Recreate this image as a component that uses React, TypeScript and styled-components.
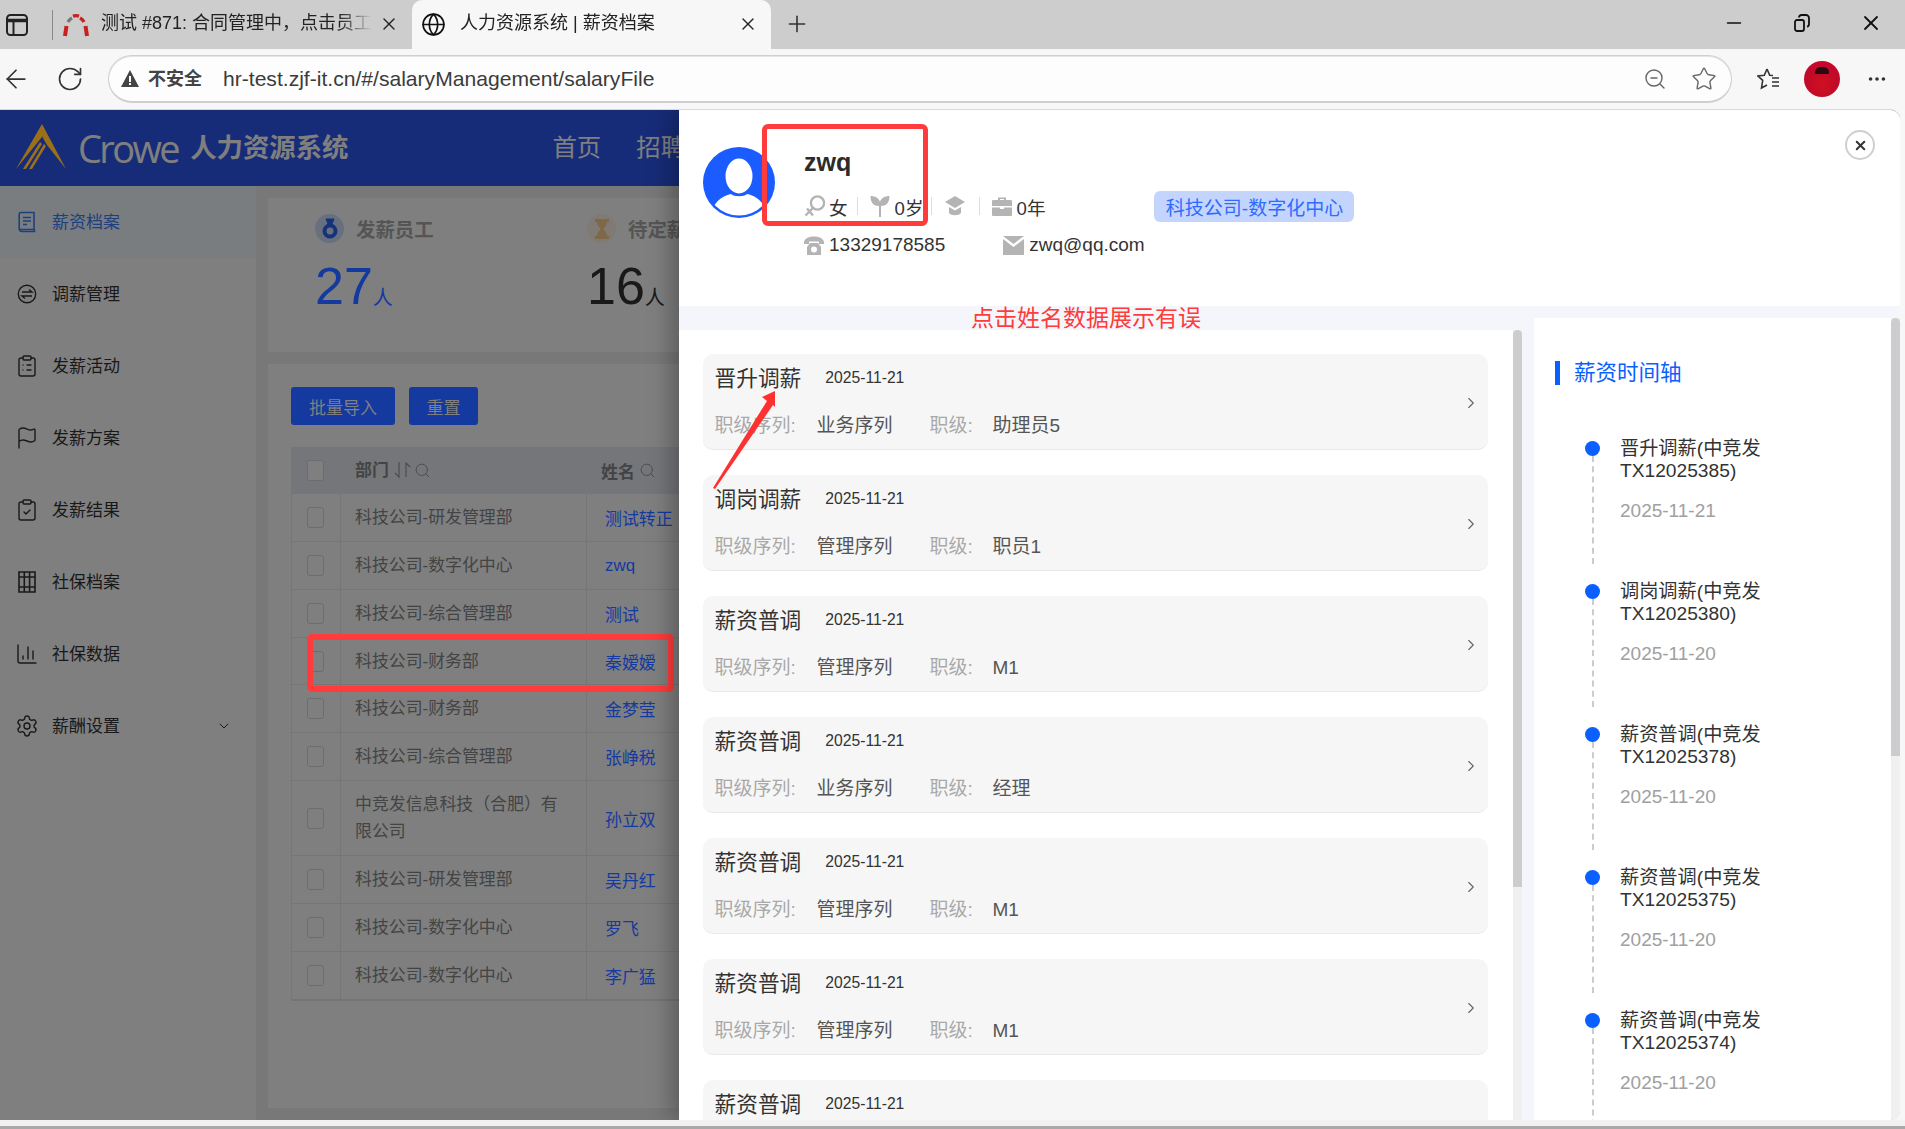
import React from "react";
import styled, { createGlobalStyle } from "styled-components";
import { ChevronRight, ChevronDown, Plus, Minus, X, ArrowLeft, RotateCw, ZoomOut, Star, MoreHorizontal, Globe, Search, Settings, BarChart3, ClipboardCheck, ClipboardList, Flag } from "lucide-react";

const FONT = `"Liberation Sans","Noto Sans CJK SC",sans-serif`;
const DIM_BLUE = "#14399f";

const Global = createGlobalStyle`
  html, body { margin: 0; padding: 0; background: #f7f7f7; }
  body { width: 1905px; height: 1129px; overflow: hidden; font-family: ${FONT}; color: #333; }
  * { box-sizing: border-box; }
  svg { flex-shrink: 0; }
`;

const Shell = styled.div`
  width: 1905px; height: 1129px; display: flex; flex-direction: column; background: #f7f7f7; position: relative; overflow: hidden;
`;
const TabBar = styled.div`
  height: 49px; background: #cdcdcd; display: flex; align-items: center; flex: none;
`;
const TabToggle = styled.div`
  width: 52px; height: 49px; display: flex; align-items: center; padding-left: 6px;
`;
const TabSep = styled.div`width: 1px; height: 30px; background: #8a8a8a;`;
const InactiveTab = styled.div`
  width: 359px; height: 49px; display: flex; align-items: center; padding-left: 10px; flex: none;
`;
const ActiveTab = styled.div`
  width: 359px; height: 49px; background: #f7f7f7; border-radius: 10px 10px 0 0; display: flex; align-items: center; padding-left: 9px; flex: none;
`;
const TabTitle = styled.div<{ $w: number; $ml: number }>`
  width: ${(p) => p.$w}px; margin-left: ${(p) => p.$ml}px; margin-bottom: 4px; font-size: 18px; line-height: 24px; color: #222; white-space: nowrap; overflow: hidden;
  -webkit-mask-image: linear-gradient(to right, #000 88%, transparent 100%);
`;
const TabClose = styled.div<{ $ml: number }>`margin-left: ${(p) => p.$ml}px; display: flex; color: #222; margin-bottom: 2px;`;
const NewTab = styled.div`margin-left: 13px; display: flex; color: #333; margin-bottom: 2px;`;
const WindowControls = styled.div`
  margin-left: auto; display: flex; align-items: center; gap: 49px; padding-right: 22px; color: #111; margin-bottom: 3px;
`;
const ToolBar = styled.div`
  height: 60px; flex: none; display: flex; align-items: center; padding: 0 0 0 1px; position: relative;
`;
const NavBtn = styled.div<{ $w: number }>`width: ${(p) => p.$w}px; display: flex; color: #333; flex: none;`;
const Address = styled.div`
  width: 1624px; height: 48px; border: 1px solid #cfcfcf; border-bottom-width: 2px; border-radius: 24px; background: #fdfdfd;
  display: flex; align-items: center; padding: 0 14px 0 12px; flex: none; box-shadow: inset 0 1px 0 #e4e4e4;
`;
const Insecure = styled.div`
  margin-left: 9px; font-size: 18px; font-weight: 700; color: #444; line-height: 24px; width: 75px;
`;
const Url = styled.div`font-size: 21.1px; color: #3b3b3b; line-height: 26px; white-space: nowrap;`;
const AddressIcons = styled.div`margin-left: auto; display: flex; align-items: center; gap: 24px; color: #666;`;
const ToolIcons = styled.div`display: flex; align-items: center; margin-left: 25px; color: #333;`;
const ProfilePic = styled.div`
  width: 36px; height: 36px; border-radius: 50%; margin-left: 23px; background: radial-gradient(circle at 50% 65%, #d01020 0%, #c00a28 55%, #d4003c 100%); position: relative; overflow: hidden; flex: none;
`;
const PicHair = styled.div`position: absolute; left: 11px; top: 6px; width: 14px; height: 7px; border-radius: 7px 7px 2px 2px; background: #2a0a10;`;
const Dots = styled.div`margin-left: 26px; display: flex; color: #333;`;

const Frame = styled.div`
  flex: none; height: 1011px; width: 1900px; position: relative; overflow: hidden; border-radius: 0 10px 10px 0; background: #fff;
  border-top: 1px solid #d8d8d8; display: flex; flex-direction: column;
`;
const AppHeader = styled.div`
  height: 76px; flex: none; background: #2e58f0; display: flex; align-items: center; padding-left: 16px;
`;
const Logo = styled.div`display: flex; position: relative; z-index: 1; margin-bottom: 2px;`;
const Crowe = styled.div`font-family: "Open Sans", ${FONT}; font-size: 38px; letter-spacing: -2.6px; font-weight: 400; color: #fff; margin-left: 12px; line-height: 48px;`;
const SystemName = styled.div`font-size: 26.4px; font-weight: 700; color: #fff; margin-left: 12px; line-height: 36px; white-space: nowrap;`;
const TopNav = styled.div`margin: 0 0 6px 204px; display: flex; gap: 35px; font-size: 24.4px; color: #fff; white-space: nowrap;`;
const AppBody = styled.div`flex: 1; display: flex; min-height: 0; background: #f0f0f0;`;
const SideBar = styled.div`width: 256px; flex: none; background: #fff;`;
const SideItem = styled.div<{ $active?: boolean }>`
  height: 72px; display: flex; align-items: center; padding: 0 24px 0 18px; font-size: 17px; gap: 17px;
  background: ${(p) => (p.$active ? "#f3fbff" : "transparent")}; color: ${(p) => (p.$active ? "#3a80ff" : "#333")};
`;
const SideText = styled.span`margin-bottom: 4px;`;
const SideIcon = styled.div`width: 17px; height: 22px; display: flex; align-items: center; justify-content: center; flex: none;`;
const SideArrow = styled.div`margin-left: auto; display: flex;`;
const Main = styled.div`flex: 1; padding: 12px 0 12px 12px; display: flex; flex-direction: column; gap: 12px; min-width: 0;`;
const StatsCard = styled.div`height: 154px; flex: none; background: #fff; display: flex; padding: 16px 47px;`;
const StatItem = styled.div`width: 272px; flex: none;`;
const StatLabelRow = styled.div`display: flex; align-items: center; gap: 12px; height: 29px;`;
const StatLabel = styled.div`font-size: 19.4px; font-weight: 700; color: #aaa; white-space: nowrap;`;
const StatIcon = styled.div<{ $bg: string; $fg: string }>`
  width: 29px; height: 29px; border-radius: 50%; background: ${(p) => p.$bg}; color: ${(p) => p.$fg}; display: flex; align-items: center; justify-content: center;
`;
const StatValueRow = styled.div<{ $c: string; $lift?: boolean }>`
  margin-top: 13px; display: flex; align-items: flex-end; color: ${(p) => p.$c}; height: 60px;
  ${(p) => (p.$lift ? "position: relative; z-index: 1;" : "")}
`;
const StatNum = styled.div`font-size: 52px; line-height: 60px;`;
const StatUnit = styled.div`font-size: 20px; line-height: 26px; margin-bottom: 5px;`;
const ListCard = styled.div`flex: 1; background: #fff; padding: 23px 0 0 23px; overflow: hidden;`;
const Buttons = styled.div`display: flex; gap: 14px; height: 38px;`;
const PrimaryBtn = styled.div<{ $w: number }>`
  width: ${(p) => p.$w}px; height: 38px; background: ${DIM_BLUE}; border-radius: 3px; color: #808080; font-size: 17px; display: flex; align-items: center; justify-content: center; position: relative; z-index: 1;
`;
const Table = styled.div`margin-top: 22px; width: 900px; border-left: 1px solid #efefef; border-bottom: 2px solid #e6e8f0;`;
const Row = styled.div<{ $h: number; $head?: boolean }>`
  display: grid; grid-template-columns: 49px 246px 1fr; height: ${(p) => p.$h}px; border-bottom: 1px solid #ececec;
  background: ${(p) => (p.$head ? "#ebedf3" : "#fff")};
  &:last-child { border-bottom: 0; }
`;
const CheckCell = styled.div`display: flex; align-items: center; padding-left: 15px; border-right: 1px solid #ececec;`;
const CheckBox = styled.div`width: 17px; height: 21px; border: 1px solid #d8d8d8; border-radius: 3px; background: #fff;`;
const DeptCell = styled.div`display: flex; align-items: center; padding: 0 24px 0 14px; font-size: 16.9px; line-height: 27px; color: #888; border-right: 1px solid #ececec;`;
const HeadCell = styled(DeptCell)`font-weight: 700; color: #888; gap: 4px;`;
const NameCell = styled.div`display: flex; align-items: center; padding-left: 18px; font-size: 16.9px; color: ${DIM_BLUE}; position: relative; z-index: 1;`;
const NameHead = styled.div`display: flex; align-items: center; padding-left: 14px; font-size: 16.9px; font-weight: 700; color: #888; gap: 4px;`;
const HeadIcons = styled.div`display: flex; align-items: center; color: #999; gap: 1px;`;
const Mask = styled.div`position: absolute; inset: 0; background: rgba(0, 0, 0, 0.5);`;
const Marker = styled.div`
  position: absolute; left: 307px; top: 524px; width: 367px; height: 58px; border: 6px solid #ff3b3b; border-radius: 5px; z-index: 2;
`;

const Drawer = styled.div`
  position: absolute; left: 679px; top: 0; right: 0; bottom: 0; background: #f4f6fb; display: flex; flex-direction: column; z-index: 3;
  box-shadow: -8px 0 22px rgba(0, 0, 0, 0.28);
`;
const Profile = styled.div`height: 196px; flex: none; background: #fff; padding: 37px 0 0 24px; display: flex; position: relative;`;
const Avatar = styled.div`width: 72px; height: 71px; flex: none;`;
const ProfileInfo = styled.div`margin-left: 29px; flex: 1; margin-top: -1px;`;
const PersonName = styled.div`font-size: 25px; font-weight: 700; line-height: 32px; color: #2b2b2b;`;
const InfoRow = styled.div`margin-top: 12px; display: flex; align-items: center; height: 32px; font-size: 18.6px; color: #333;`;
const ContactRow = styled.div`margin-top: 7px; display: flex; align-items: center; height: 32px; font-size: 19px; color: #333;`;
const InfoIcon = styled.div<{ $ml?: number; $mr?: number }>`display: flex; margin-left: ${(p) => p.$ml ?? 0}px; margin-right: ${(p) => p.$mr ?? 5}px; flex: none;`;
const Sep = styled.div<{ $l: number; $r: number }>`width: 1px; height: 18px; background: #ddd; margin: 0 ${(p) => p.$r}px 0 ${(p) => p.$l}px; flex: none;`;
const Tag = styled.div`
  margin-left: 109px; height: 31px; width: 200px; background: #c3d5fd; border-radius: 6px; color: #2f6bff; font-size: 19px; display: flex; align-items: center; justify-content: center; white-space: nowrap;
`;
const CloseBtn = styled.div`
  position: absolute; right: 25px; top: 20px; width: 30px; height: 30px; border-radius: 50%; border: 2px solid #cfcfcf; display: flex; align-items: center; justify-content: center; color: #333; background: #fff;
`;
const DrawerBody = styled.div`flex: 1; display: flex; min-height: 0;`;
const ListColumn = styled.div`margin-top: 24px; width: 843px; background: #fff; display: flex; flex: none; min-height: 0;`;
const ListScroll = styled.div`flex: 1; padding: 24px 25px 0 24px; overflow: hidden; display: flex; flex-direction: column; gap: 25px;`;
const Track = styled.div`width: 9px; flex: none; background: #f0f0f0; position: relative;`;
const Thumb = styled.div<{ $h: number }>`width: 9px; height: ${(p) => p.$h}px; background: #cdcdd0; border-radius: 5px 5px 0 0;`;
const SalaryCard = styled.div`
  flex: none; height: 96px; background: #f6f6f6; border-radius: 10px; border-bottom: 1px solid #e9e9e9; padding: 8px 14px 0 11.500px; position: relative;
`;
const CardHead = styled.div`display: flex; align-items: center; height: 32px;`;
const CardTitle = styled.div`font-size: 21.7px; line-height: 32px; color: #333; margin-top: 1px;`;
const CardDate = styled.div`font-size: 15.7px; margin-left: 24px; color: #333;`;
const CardMeta = styled.div`margin-top: 16px; height: 32px; line-height: 32px; display: flex; align-items: baseline; font-size: 19px;`;
const MetaLabel = styled.div<{ $w: number }>`width: ${(p) => p.$w}px; color: #a9a9a9; flex: none;`;
const MetaValue = styled.div<{ $w?: number }>`${(p) => (p.$w ? `width: ${p.$w}px;` : "")} color: #555; flex: none;`;
const CardArrow = styled.div`position: absolute; right: 8px; top: 40px; color: #666; display: flex;`;
const RightColumn = styled.div`margin: 12px 0 0 12px; width: 366px; display: flex; flex: none; background: #fff; min-height: 0;`;
const TimelineScroll = styled.div`flex: 1; padding: 43px 0 0 21px; overflow: hidden;`;
const TimelineHeading = styled.div`
  height: 24px; border-left: 5px solid #0a5fff; padding-left: 14px; font-size: 21.5px; line-height: 24px; color: #0a5fff;
`;
const TimelineList = styled.div`margin-top: 52px; padding-left: 30px;`;
const TimelineItem = styled.div`height: 143px; display: flex; gap: 20px;`;
const Node = styled.div`width: 15px; flex: none; display: flex; flex-direction: column; align-items: center; padding-top: 4px;`;
const Dot = styled.div`width: 15px; height: 15px; border-radius: 50%; background: #0a5fff; flex: none;`;
const Dash = styled.div`width: 0; height: 108px; border-left: 2px dashed #ccc;`;
const ItemTitle = styled.div`font-size: 19.2px; line-height: 22px; color: #333; width: 170px; padding-top: 1px;`;
const ItemDate = styled.div`font-size: 19px; line-height: 23px; color: #a0a0a0; margin-top: 17px;`;

const NameBox = styled.div`
  position: absolute; left: 83px; top: 14px; width: 166px; height: 102px; border: 5px solid #ff3b3b; border-radius: 6px;
`;
const Notice = styled.div`
  position: absolute; left: 292px; top: 193px; font-size: 23px; line-height: 30px; color: #ff3b3b; white-space: nowrap;
`;
const ArrowMark = styled.svg`position: absolute; left: 25px; top: 270px;`;
const BottomStrip = styled.div`flex: 1; background: #f2f2f2; border-bottom: 3px solid #a9a9a9;`;

const sideIcon = { size: 24, strokeWidth: 1.4 } as const;
const FileIcon = () => (
  <svg width="18" height="22" viewBox="0 0 18 22" fill="none" stroke="currentColor" strokeWidth="1.6">
    <path d="M3 1.5h13v17H3a1.8 1.8 0 0 1-1.8-1.8V3.2A1.8 1.8 0 0 1 3 1.5z" />
    <path d="M1.2 17.5c0 2 1.2 3 3 3H16.5v-2M5 6.500h8M5 10h8M5 13.500h4" />
  </svg>
);
const ExchangeIcon = () => (
  <svg width="20" height="20" viewBox="0 0 20 20" fill="none" stroke="currentColor" strokeWidth="1.4">
    <circle cx="10" cy="10" r="8.7" />
    <path d="M5 8h10l-3-2.500M15 12H5l3 2.500" />
  </svg>
);
const BooksIcon = () => (
  <svg width="18" height="22" viewBox="0 0 18 22" fill="none" stroke="currentColor" strokeWidth="1.6">
    <path d="M1 1h16v20H1zM6.300 1v20M11.600 1v20M1 6h16M1 16h16" />
  </svg>
);
const LogoMark = () => (
  <svg width="50" height="46" viewBox="0 0 50 46" fill="#9c7018">
    <path d="M26 0 L50 45 L31 21 Q28 16 26 12 Z" />
    <path d="M26 0 L26 13 L0 45 Z" />
    <path d="M26 20 L10 45 L7 45 L24 18 Z" />
    <path d="M30 22 L16 45 L13 45 L28 20 Z" />
  </svg>
);
const RedmineIcon = () => (
  <svg width="26" height="26" viewBox="0 0 26 26" fill="none">
    <path d="M2 24 3.500 14" stroke="#c81f1f" strokeWidth="4" />
    <path d="M24 24 22.500 14" stroke="#c81f1f" strokeWidth="4" />
    <path d="M5 10c1-2 2-3 4-4" stroke="#777" strokeWidth="3.400" />
    <path d="M21 10c-1-2-2-3-4-4" stroke="#c81f1f" strokeWidth="3.400" />
    <path d="M10 4.200c2-.8 4-.8 6 0" stroke="#c81f1f" strokeWidth="3.400" />
  </svg>
);
const AvatarIcon = () => (
  <svg width="72" height="71" viewBox="0 0 72 71">
    <defs><clipPath id="av"><ellipse cx="36" cy="35.500" rx="33.500" ry="33" /></clipPath></defs>
    <ellipse cx="36" cy="35.500" rx="36" ry="35.500" fill="#1a5cff" />
    <ellipse cx="36" cy="29" rx="13.500" ry="17.500" fill="#fff" />
    <g clipPath="url(#av)"><path d="M8 71c0-14 10-22 20-24 3 3 13 3 16 0 10 2 20 10 20 24z" fill="#fff" /></g>
  </svg>
);
const FemaleIcon = () => (
  <svg width="22" height="22" viewBox="0 0 22 22" fill="none" stroke="#b4b4b4" strokeWidth="2.400">
    <circle cx="13.500" cy="8" r="6.600" />
    <path d="M9 13 1.500 20.500M3 13.500l6 7" />
  </svg>
);
const SproutIcon = () => (
  <svg width="20" height="22" viewBox="0 0 20 22" fill="#b4b4b4">
    <path d="M9 22h2V11c5 0 8.500-3 8.500-10C15 1 11 3 10 7 9 3 5 1 .5 1 .5 8 4 11 9 11z" />
  </svg>
);
const GradIcon = () => (
  <svg width="20" height="22" viewBox="0 0 20 22" fill="#b4b4b4">
    <path d="M10 1 20 7 10 13 0 7z" />
    <path d="M4 12l6 3.600 6-3.600v6c-2 3-10 3-12 0z" />
  </svg>
);
const CaseIcon = () => (
  <svg width="20" height="20" viewBox="0 0 20 20" fill="#b4b4b4">
    <path d="M6 4V1.500h8V4h5a1 1 0 0 1 1 1v5H0V5a1 1 0 0 1 1-1zm2 0h4V3H8z" fillRule="evenodd" />
    <path d="M0 11.500h8v1.500h4v-1.500h8V19a1 1 0 0 1-1 1H1a1 1 0 0 1-1-1z" />
  </svg>
);
const PhoneIcon = () => (
  <svg width="20" height="19" viewBox="0 0 20 19" fill="#b4b4b4">
    <path d="M0 6C1 2 5 .5 10 .5S19 2 20 6v2h-5V5.500H5V8H0z" />
    <path d="M6 7h8l3 4v8H3v-8zm4 3.500a3 3 0 1 0 0 6 3 3 0 0 0 0-6z" fillRule="evenodd" />
  </svg>
);
const MailIcon = () => (
  <svg width="21" height="19" viewBox="0 0 21 19" fill="#b4b4b4">
    <path d="M0 0h21L10.500 8z" />
    <path d="M0 3l10.500 8L21 3v16H0z" />
  </svg>
);
const MedalIcon = () => (
  <svg width="16" height="21" viewBox="0 0 16 21" fill="none" stroke="currentColor">
    <path d="M4 1h8l-2 5H6z" fill="currentColor" />
    <circle cx="8" cy="13" r="5.500" strokeWidth="4" />
  </svg>
);
const HourglassIcon = () => (
  <svg width="14" height="20" viewBox="0 0 14 20" fill="currentColor">
    <path d="M0 0h14v3h-2c0 4-3 5-3.500 7 .5 2 3.500 3 3.500 7h2v3H0v-3h2c0-4 3-5 3.500-7C5 8 2 7 2 3H0z" />
  </svg>
);
const WarnIcon = () => (
  <svg width="18" height="17" viewBox="0 0 18 17" fill="#444">
    <path d="M9 0 18 17H0zM8 6v6h2V6zm0 7v2h2v-2z" fillRule="evenodd" />
  </svg>
);
const TabsIcon = () => (
  <svg width="22" height="22" viewBox="0 0 22 22" fill="none" stroke="#222" strokeWidth="2">
    <rect x="1" y="1" width="20" height="20" rx="3.500" />
    <path d="M1 6.500h20" strokeWidth="3.500" /><path d="M7.500 6.500V21" />
  </svg>
);
const RestoreIcon = () => (
  <svg width="16" height="18" viewBox="0 0 16 18" fill="none" stroke="#111" strokeWidth="1.8">
    <rect x="1" y="6" width="9" height="11" rx="2" />
    <path d="M5 3.500C5 2 6 1 7.500 1H12c1.500 0 3 1.500 3 3v6c0 1.500-.8 2.500-2 2.700" />
  </svg>
);
const FavIcon = () => (
  <svg width="24" height="24" viewBox="0 0 24 24" fill="none" stroke="#333" strokeWidth="1.6">
    <path d="M10 2l2.700 6.200 3.300.3M10 2 7.300 8.200 1 9l4.700 4.300L4.500 21l5.500-3M22 11h-7M22 15h-7M22 19h-7" />
  </svg>
);
const SortIcon = () => (
  <svg width="20" height="18" viewBox="0 0 20 18" fill="none" stroke="#999" strokeWidth="1.2">
    <path d="M6 1v15l-4-4M13 16V2l4 4" />
  </svg>
);

const cards = [
  ["晋升调薪", "业务序列", "助理员5"],
  ["调岗调薪", "管理序列", "职员1"],
  ["薪资普调", "管理序列", "M1"],
  ["薪资普调", "业务序列", "经理"],
  ["薪资普调", "管理序列", "M1"],
  ["薪资普调", "管理序列", "M1"],
  ["薪资普调", "管理序列", "M1"],
];
const timeline = [
  ["晋升调薪", "TX12025385", "2025-11-21"],
  ["调岗调薪", "TX12025380", "2025-11-20"],
  ["薪资普调", "TX12025378", "2025-11-20"],
  ["薪资普调", "TX12025375", "2025-11-20"],
  ["薪资普调", "TX12025374", "2025-11-20"],
];
const rows: [string, string, number][] = [
  ["科技公司-研发管理部", "测试转正", 48],
  ["科技公司-数字化中心", "zwq", 48],
  ["科技公司-综合管理部", "测试", 48],
  ["科技公司-财务部", "秦嫒嫒", 47],
  ["科技公司-财务部", "金梦莹", 48],
  ["科技公司-综合管理部", "张峥税", 48],
  ["中竞发信息科技（合肥）有限公司", "孙立双", 75],
  ["科技公司-研发管理部", "吴丹红", 48],
  ["科技公司-数字化中心", "罗飞", 48],
  ["科技公司-数字化中心", "李广猛", 47],
];
const menu = [
  { t: "薪资档案", i: <FileIcon />, active: true },
  { t: "调薪管理", i: <ExchangeIcon /> },
  { t: "发薪活动", i: <ClipboardList {...sideIcon} /> },
  { t: "发薪方案", i: <Flag {...sideIcon} /> },
  { t: "发薪结果", i: <ClipboardCheck {...sideIcon} /> },
  { t: "社保档案", i: <BooksIcon /> },
  { t: "社保数据", i: <BarChart3 {...sideIcon} /> },
  { t: "薪酬设置", i: <Settings {...sideIcon} />, more: true },
];

export default function App() {
  return (
    <Shell>
      <Global />
      <TabBar>
        <TabToggle><TabsIcon /></TabToggle>
        <TabSep />
        <InactiveTab>
          <RedmineIcon />
          <TabTitle $w={271} $ml={12}>测试 #871: 合同管理中，点击员工</TabTitle>
          <TabClose $ml={7}><X size={20} strokeWidth={1.6} /></TabClose>
        </InactiveTab>
        <ActiveTab>
          <Globe size={25} strokeWidth={1.6} color="#111" />
          <TabTitle $w={272} $ml={14}>人力资源系统 | 薪资档案</TabTitle>
          <TabClose $ml={6}><X size={20} strokeWidth={1.6} /></TabClose>
        </ActiveTab>
        <NewTab><Plus size={26} strokeWidth={1.5} /></NewTab>
        <WindowControls>
          <Minus size={22} strokeWidth={1.8} />
          <RestoreIcon />
          <X size={24} strokeWidth={1.8} />
        </WindowControls>
      </TabBar>
      <ToolBar>
        <NavBtn $w={55}><ArrowLeft size={30} strokeWidth={1.4} /></NavBtn>
        <NavBtn $w={52}><RotateCw size={28} strokeWidth={1.4} /></NavBtn>
        <Address>
          <WarnIcon />
          <Insecure>不安全</Insecure>
          <Url>hr-test.zjf-it.cn/#/salaryManagement/salaryFile</Url>
          <AddressIcons>
            <ZoomOut size={24} strokeWidth={1.4} />
            <Star size={26} strokeWidth={1.3} />
          </AddressIcons>
        </Address>
        <ToolIcons>
          <FavIcon />
          <ProfilePic><PicHair /></ProfilePic>
          <Dots><MoreHorizontal size={22} strokeWidth={2} /></Dots>
        </ToolIcons>
      </ToolBar>
      <Frame>
        <AppHeader>
          <Logo><LogoMark /></Logo>
          <Crowe>Crowe</Crowe>
          <SystemName>人力资源系统</SystemName>
          <TopNav><span>首页</span><span>招聘管理</span></TopNav>
        </AppHeader>
        <AppBody>
          <SideBar>
            {menu.map((m) => (
              <SideItem key={m.t} $active={m.active}>
                <SideIcon>{m.i}</SideIcon>
                <SideText>{m.t}</SideText>
                {m.more && <SideArrow><ChevronDown size={16} strokeWidth={1.5} /></SideArrow>}
              </SideItem>
            ))}
          </SideBar>
          <Main>
            <StatsCard>
              <StatItem>
                <StatLabelRow>
                  <StatIcon $bg="#d0e0ff" $fg="#2a66f0"><MedalIcon /></StatIcon>
                  <StatLabel>发薪员工</StatLabel>
                </StatLabelRow>
                <StatValueRow $c={DIM_BLUE} $lift><StatNum>27</StatNum><StatUnit>人</StatUnit></StatValueRow>
              </StatItem>
              <StatItem>
                <StatLabelRow>
                  <StatIcon $bg="#fff4e6" $fg="#ffd090"><HourglassIcon /></StatIcon>
                  <StatLabel>待定薪员工</StatLabel>
                </StatLabelRow>
                <StatValueRow $c="#333"><StatNum>16</StatNum><StatUnit>人</StatUnit></StatValueRow>
              </StatItem>
            </StatsCard>
            <ListCard>
              <Buttons>
                <PrimaryBtn $w={104}>批量导入</PrimaryBtn>
                <PrimaryBtn $w={69}>重置</PrimaryBtn>
              </Buttons>
              <Table>
                <Row $h={47} $head>
                  <CheckCell><CheckBox /></CheckCell>
                  <HeadCell>部门<HeadIcons><SortIcon /><Search size={17} strokeWidth={1.4} /></HeadIcons></HeadCell>
                  <NameHead>姓名<HeadIcons><Search size={17} strokeWidth={1.4} /></HeadIcons></NameHead>
                </Row>
                {rows.map(([d, n, h], i) => (
                  <Row key={i} $h={h}>
                    <CheckCell><CheckBox /></CheckCell>
                    <DeptCell>{d}</DeptCell>
                    <NameCell>{n}</NameCell>
                  </Row>
                ))}
              </Table>
            </ListCard>
          </Main>
        </AppBody>
        <Mask />
        <Marker />
        <Drawer>
          <Profile>
            <Avatar><AvatarIcon /></Avatar>
            <ProfileInfo>
              <PersonName>zwq</PersonName>
              <InfoRow>
                <InfoIcon $mr={3}><FemaleIcon /></InfoIcon>女
                <Sep $l={9} $r={12} />
                <InfoIcon><SproutIcon /></InfoIcon>0岁
                <Sep $l={7} $r={13} />
                <InfoIcon><GradIcon /></InfoIcon>
                <Sep $l={9} $r={12} />
                <InfoIcon><CaseIcon /></InfoIcon>0年
                <Tag>科技公司-数字化中心</Tag>
              </InfoRow>
              <ContactRow>
                <InfoIcon><PhoneIcon /></InfoIcon>13329178585
                <InfoIcon $ml={58}><MailIcon /></InfoIcon>
                <span>zwq@qq.com</span>
              </ContactRow>
            </ProfileInfo>
            <CloseBtn><X size={15} strokeWidth={3.2} /></CloseBtn>
          </Profile>
          <DrawerBody>
            <ListColumn>
              <ListScroll>
                {cards.map(([t, s, l], i) => (
                  <SalaryCard key={i}>
                    <CardHead><CardTitle>{t}</CardTitle><CardDate>2025-11-21</CardDate></CardHead>
                    <CardMeta>
                      <MetaLabel $w={102}>职级序列:</MetaLabel>
                      <MetaValue $w={113}>{s}</MetaValue>
                      <MetaLabel $w={63}>职级:</MetaLabel>
                      <MetaValue>{l}</MetaValue>
                    </CardMeta>
                    <CardArrow><ChevronRight size={18} strokeWidth={1.5} /></CardArrow>
                  </SalaryCard>
                ))}
              </ListScroll>
              <Track><Thumb $h={557} /></Track>
            </ListColumn>
            <RightColumn>
              <TimelineScroll>
                <TimelineHeading>薪资时间轴</TimelineHeading>
                <TimelineList>
                  {timeline.map(([t, c, d], i) => (
                    <TimelineItem key={i}>
                      <Node><Dot /><Dash /></Node>
                      <div>
                        <ItemTitle>{t}(中竞发 {c})</ItemTitle>
                        <ItemDate>{d}</ItemDate>
                      </div>
                    </TimelineItem>
                  ))}
                </TimelineList>
              </TimelineScroll>
              <Track><Thumb $h={438} /></Track>
            </RightColumn>
          </DrawerBody>
          <NameBox />
          <Notice>点击姓名数据展示有误</Notice>
          <ArrowMark width="80" height="110" viewBox="0 0 80 110">
            <polygon points="71,11 58,17 63,21 9,108 11,109 69,25 71,27" fill="#ff3030" />
          </ArrowMark>
        </Drawer>
      </Frame>
      <BottomStrip />
    </Shell>
  );
}
